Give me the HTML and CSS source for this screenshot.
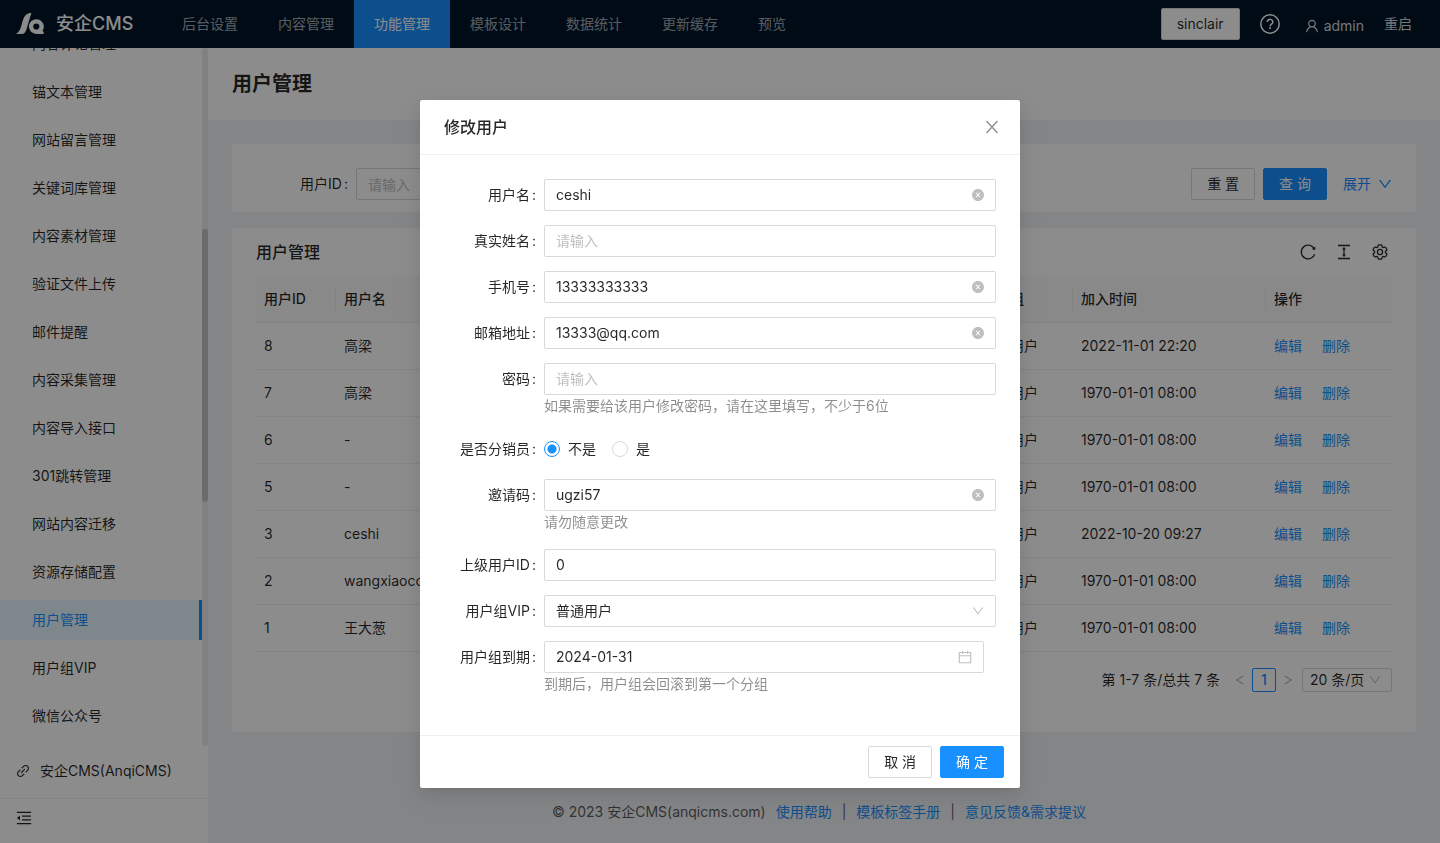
FILE: index.html
```html
<!DOCTYPE html>
<html lang="zh-CN">
<head>
<meta charset="utf-8">
<meta name="viewport" content="width=device-width, initial-scale=1">
<title>用户管理 - 安企CMS</title>
<link rel="stylesheet" href="styles.css">
</head>
<body>
<svg class="sprite" aria-hidden="true">
  <symbol id="i-clear" viewBox="64 64 896 896"><path d="M512 64C264.6 64 64 264.6 64 512s200.6 448 448 448 448-200.6 448-448S759.4 64 512 64zm165.4 618.2l-66-.3L512 563.4l-99.3 118.4-66.1.3c-4.4 0-8-3.5-8-8 0-1.9.7-3.7 1.9-5.2l130.1-155L340.5 359a8.32 8.32 0 01-1.9-5.2c0-4.4 3.6-8 8-8l66.1.3L512 464.6l99.3-118.4 66-.3c4.4 0 8 3.5 8 8 0 1.9-.7 3.7-1.9 5.2L553.5 514l130 155c1.2 1.5 1.9 3.3 1.9 5.2 0 4.4-3.6 8-8 8z"/></symbol>
  <symbol id="i-user" viewBox="64 64 896 896"><path d="M858.5 763.6a374 374 0 00-80.6-119.5 375.63 375.63 0 00-119.5-80.6c-.4-.2-.8-.3-1.2-.5C719.5 518 760 444.7 760 362c0-137-111-248-248-248S264 225 264 362c0 82.7 40.5 156 102.8 201.1-.4.2-.8.3-1.2.5-44.8 18.9-85 46-119.5 80.6a375.63 375.63 0 00-80.6 119.5A371.7 371.7 0 00136 901.8a8 8 0 008 8.2h60c4.4 0 7.9-3.5 8-7.8 2-77.2 33-149.5 87.8-204.3 56.7-56.7 132-87.9 212.2-87.9s155.5 31.2 212.2 87.9C779 752.7 810 825 812 902.2c.1 4.4 3.6 7.8 8 7.8h60a8 8 0 008-8.2c-1-47.8-10.9-94.3-29.5-138.2zM512 534c-45.9 0-89.1-17.9-121.6-50.4S340 407.9 340 362c0-45.9 17.9-89.1 50.4-121.6S466.1 190 512 190s89.1 17.9 121.6 50.4S684 316.1 684 362c0 45.9-17.9 89.1-50.4 121.6S557.9 534 512 534z"/></symbol>
  <symbol id="i-down" viewBox="64 64 896 896"><path d="M884 256h-75c-5.1 0-9.9 2.5-12.9 6.6L512 654.2 227.9 262.6c-3-4.1-7.8-6.6-12.9-6.6h-75c-6.5 0-10.3 7.4-6.5 12.7l352.6 486.1c12.8 17.6 39 17.6 51.7 0l352.6-486.1c3.9-5.3.1-12.7-6.4-12.7z"/></symbol>
  <symbol id="i-reload" viewBox="64 64 896 896"><path d="M909.1 209.3l-56.4 44.1C775.8 155.1 656.2 92 521.9 92 290 92 102.3 279.5 102 511.5 101.7 743.7 289.8 932 521.9 932c181.3 0 335.8-115 394.6-276.1 1.5-4.2-.7-8.9-4.9-10.3l-56.7-19.5a8 8 0 00-10.1 4.8c-1.8 5-3.8 10-5.9 14.9-17.3 41-42.1 77.8-73.7 109.4A344.77 344.77 0 01655.9 829c-42.3 17.9-87.4 27-133.8 27-46.5 0-91.5-9.1-133.8-27A341.5 341.5 0 01279 755.2a342.16 342.16 0 01-73.7-109.4c-17.9-42.4-27-87.4-27-133.9s9.1-91.5 27-133.9c17.3-41 42.1-77.8 73.7-109.4 31.6-31.6 68.4-56.4 109.3-73.8 42.3-17.9 87.4-27 133.8-27 46.5 0 91.5 9.1 133.8 27a341.5 341.5 0 01109.3 73.8c9.9 9.9 19.2 20.4 27.8 31.4l-60.2 47a8 8 0 003 14.1l175.6 43c5 1.2 9.9-2.6 9.9-7.7l.8-180.9c-.1-6.6-7.8-10.3-13-6.2z"/></symbol>
  <symbol id="i-height" viewBox="64 64 896 896"><path d="M840 836H184c-4.4 0-8 3.6-8 8v60c0 4.4 3.6 8 8 8h656c4.4 0 8-3.6 8-8v-60c0-4.4-3.6-8-8-8zm0-724H184c-4.4 0-8 3.6-8 8v60c0 4.4 3.6 8 8 8h656c4.4 0 8-3.6 8-8v-60c0-4.4-3.6-8-8-8zM610.8 378c6 0 9.4-7 5.7-11.7L515.7 238.7a7.14 7.14 0 00-11.3 0L403.6 366.3a7.23 7.23 0 005.7 11.7H476v268h-62.8c-6 0-9.4 7-5.7 11.7l100.8 127.5c2.9 3.7 8.5 3.7 11.3 0l100.8-127.5c3.7-4.7.4-11.7-5.7-11.7H548V378h62.8z"/></symbol>
  <symbol id="i-gear" viewBox="2 2 20 20"><g fill="none" stroke="currentColor" stroke-width="1.6" stroke-linejoin="round"><path d="M9.594 3.94c.09-.542.56-.94 1.11-.94h2.593c.55 0 1.02.398 1.11.94l.213 1.281c.063.374.313.686.645.87.074.04.147.083.22.127.325.196.72.257 1.075.124l1.217-.456a1.125 1.125 0 0 1 1.37.49l1.296 2.247a1.125 1.125 0 0 1-.26 1.431l-1.003.827c-.293.241-.438.613-.43.992a7.723 7.723 0 0 1 0 .255c-.008.378.137.75.43.991l1.004.827c.424.35.534.955.26 1.43l-1.298 2.247a1.125 1.125 0 0 1-1.369.491l-1.217-.456c-.355-.133-.75-.072-1.076.124a6.47 6.47 0 0 1-.22.128c-.331.183-.581.495-.644.869l-.213 1.281c-.09.543-.56.94-1.11.94h-2.594c-.55 0-1.019-.398-1.11-.94l-.213-1.281c-.062-.374-.312-.686-.644-.87a6.52 6.52 0 0 1-.22-.127c-.325-.196-.72-.257-1.076-.124l-1.217.456a1.125 1.125 0 0 1-1.369-.49l-1.297-2.247a1.125 1.125 0 0 1 .26-1.431l1.004-.827c.292-.24.437-.613.43-.991a6.932 6.932 0 0 1 0-.255c.007-.38-.138-.751-.43-.992l-1.004-.827a1.125 1.125 0 0 1-.26-1.43l1.297-2.247a1.125 1.125 0 0 1 1.37-.491l1.216.456c.356.133.751.072 1.076-.124.072-.044.146-.086.22-.128.332-.183.582-.495.644-.869l.214-1.28Z"/><circle cx="12" cy="12" r="3.2"/></g></symbol>
  <symbol id="i-calendar" viewBox="64 64 896 896"><path d="M880 184H712v-64c0-4.4-3.6-8-8-8h-56c-4.4 0-8 3.6-8 8v64H384v-64c0-4.4-3.6-8-8-8h-56c-4.4 0-8 3.6-8 8v64H144c-17.7 0-32 14.3-32 32v664c0 17.7 14.3 32 32 32h736c17.7 0 32-14.3 32-32V216c0-17.7-14.3-32-32-32zm-40 656H184V460h656v380zM184 392V256h128v48c0 4.4 3.6 8 8 8h56c4.4 0 8-3.6 8-8v-48h256v48c0 4.4 3.6 8 8 8h56c4.4 0 8-3.6 8-8v-48h128v136H184z"/></symbol>
  <symbol id="i-fold" viewBox="64 64 896 896"><path d="M408 442h480c4.4 0 8-3.6 8-8v-56c0-4.4-3.6-8-8-8H408c-4.4 0-8 3.6-8 8v56c0 4.4 3.6 8 8 8zm-8 204c0 4.4 3.6 8 8 8h480c4.4 0 8-3.6 8-8v-56c0-4.4-3.6-8-8-8H408c-4.4 0-8 3.6-8 8v56zm504-486H120c-4.4 0-8 3.6-8 8v56c0 4.4 3.6 8 8 8h784c4.4 0 8-3.6 8-8v-56c0-4.4-3.6-8-8-8zm0 632H120c-4.4 0-8 3.6-8 8v56c0 4.4 3.6 8 8 8h784c4.4 0 8-3.6 8-8v-56c0-4.4-3.6-8-8-8zM115.4 518.9L271.7 642c5.8 4.6 14.4.5 14.4-6.9V388.9c0-7.4-8.5-11.5-14.4-6.9L115.4 505.1a8.74 8.74 0 000 13.8z"/></symbol>
  <symbol id="i-link" viewBox="64 64 896 896"><path d="M574 665.4a8.03 8.03 0 00-11.3 0L446.5 781.6c-53.8 53.8-144.6 59.5-204 0-59.5-59.5-53.8-150.2 0-204l116.2-116.2c3.1-3.1 3.1-8.2 0-11.3l-39.8-39.8a8.03 8.03 0 00-11.3 0L191.4 526.5c-84.6 84.6-84.6 221.5 0 306s221.5 84.6 306 0l116.2-116.2c3.1-3.1 3.1-8.2 0-11.3L574 665.4zm258.6-474c-84.6-84.6-221.5-84.6-306 0L410.3 307.6a8.03 8.03 0 000 11.3l39.7 39.7c3.1 3.1 8.2 3.1 11.3 0l116.2-116.2c53.8-53.8 144.6-59.5 204 0 59.5 59.5 53.8 150.2 0 204L665.3 562.6a8.03 8.03 0 000 11.3l39.8 39.8c3.1 3.1 8.2 3.1 11.3 0l116.2-116.2c84.5-84.6 84.5-221.5 0-306.1zM610.1 372.3a8.03 8.03 0 00-11.3 0L372.3 598.7a8.03 8.03 0 000 11.3l39.6 39.6c3.1 3.1 8.2 3.1 11.3 0l226.4-226.4c3.1-3.1 3.1-8.2 0-11.3l-39.5-39.6z"/></symbol>
  <symbol id="i-close" viewBox="0 0 16 16"><path d="M2.5 2l11 12M13.5 2l-11 12" fill="none" stroke="currentColor" stroke-width="1.3"/></symbol>
  <symbol id="i-prev" viewBox="0 0 12 12"><path d="M10 1L2 6l8 5" fill="none" stroke="currentColor"/></symbol>
  <symbol id="i-next" viewBox="0 0 12 12"><path d="M2 1l8 5-8 5" fill="none" stroke="currentColor"/></symbol>
  <symbol id="i-help" viewBox="0 0 20 20"><g fill="none" stroke="currentColor" stroke-width="1.5"><circle cx="10" cy="10" r="9.2"/><path d="M7.2 8a2.8 2.6 0 1 1 4.4 2.1c-1 .7-1.6 1.1-1.6 2.3"/></g><circle cx="10" cy="14.3" r="1"/></symbol>
  <symbol id="i-logo" viewBox="0 0 28 22"><path d="M0 21C3.200 19 4.500 16 5.700 11.500 7.200 5.500 9 1 13 .3c1.300-.3 2.300-.3 2.300.2 0 .5-.5 1.200-.8 2.300L10.600 16C9.500 19.700 8 21 5.500 21z"/><path d="M20.300 6.200a7.400 7.400 0 0 0 0 14.800H27.600c.3-.6.3-1.800-.4-2.600l-.7-.7a7.400 7.400 0 0 0-6.200-11.500zm0 4.200a3.100 3.100 0 1 1 0 6.200 3.100 3.100 0 0 1 0-6.200z" fill-rule="evenodd"/></symbol>
</svg>

<header class="topbar">
  <a class="brand" href="#"><svg class="brand-logo"><use href="#i-logo"/></svg><span>安企CMS</span></a>
  <nav class="topnav">
    <a href="#">后台设置</a>
    <a href="#">内容管理</a>
    <a class="is-active" href="#">功能管理</a>
    <a href="#">模板设计</a>
    <a href="#">数据统计</a>
    <a href="#">更新缓存</a>
    <a href="#">预览</a>
  </nav>
  <div class="top-actions">
    <button class="btn site-btn" type="button">sinclair</button>
    <button class="icon-btn help-btn" type="button" aria-label="帮助"><svg class="icon-20"><use href="#i-help"/></svg></button>
    <a class="account" href="#"><svg class="icon-14"><use href="#i-user"/></svg><span>admin</span></a>
    <a href="#">重启</a>
  </div>
</header>

<div class="layout">
  <aside class="sidebar">
    <div class="menu-scroll">
      <nav class="menu">
        <a href="#">内容评论管理</a>
        <a href="#">锚文本管理</a>
        <a href="#">网站留言管理</a>
        <a href="#">关键词库管理</a>
        <a href="#">内容素材管理</a>
        <a href="#">验证文件上传</a>
        <a href="#">邮件提醒</a>
        <a href="#">内容采集管理</a>
        <a href="#">内容导入接口</a>
        <a href="#">301跳转管理</a>
        <a href="#">网站内容迁移</a>
        <a href="#">资源存储配置</a>
        <a class="is-active" href="#">用户管理</a>
        <a href="#">用户组VIP</a>
        <a href="#">微信公众号</a>
      </nav>
      <div class="scroll-track"><div class="scroll-thumb"></div></div>
    </div>
    <a class="site-link" href="#"><svg class="icon-14"><use href="#i-link"/></svg><span>安企CMS(AnqiCMS)</span></a>
    <button class="collapse" type="button" aria-label="收起菜单"><svg class="icon-16"><use href="#i-fold"/></svg></button>
  </aside>

  <main class="content">
    <div class="page-head"><h1>用户管理</h1></div>
    <div class="page-body">
      <form class="card search">
        <label class="field-label" for="q-id">用户ID</label>
        <input id="q-id" class="box search-input" type="text" placeholder="请输入">
        <div class="search-actions">
          <button class="btn" type="button">重 置</button>
          <button class="btn btn-primary" type="button">查 询</button>
          <a class="expand" href="#">展开<svg class="icon-14"><use href="#i-down"/></svg></a>
        </div>
      </form>

      <section class="card list">
        <div class="list-head">
          <h2>用户管理</h2>
          <div class="tools">
            <button class="icon-btn" type="button" aria-label="刷新"><svg class="icon-16"><use href="#i-reload"/></svg></button>
            <button class="icon-btn" type="button" aria-label="密度"><svg class="icon-16"><use href="#i-height"/></svg></button>
            <button class="icon-btn" type="button" aria-label="列设置"><svg class="icon-16"><use href="#i-gear"/></svg></button>
          </div>
        </div>
        <table class="table">
          <colgroup><col class="c-id"><col><col class="c-group"><col class="c-time"><col class="c-op"></colgroup>
          <thead><tr><th>用户ID</th><th>用户名</th><th>用户组</th><th>加入时间</th><th>操作</th></tr></thead>
          <tbody>
            <tr><td>8</td><td>高梁</td><td>普通用户</td><td>2022-11-01 22:20</td><td><a href="#">编辑</a><a href="#">删除</a></td></tr>
            <tr><td>7</td><td>高梁</td><td>普通用户</td><td>1970-01-01 08:00</td><td><a href="#">编辑</a><a href="#">删除</a></td></tr>
            <tr><td>6</td><td>-</td><td>普通用户</td><td>1970-01-01 08:00</td><td><a href="#">编辑</a><a href="#">删除</a></td></tr>
            <tr><td>5</td><td>-</td><td>普通用户</td><td>1970-01-01 08:00</td><td><a href="#">编辑</a><a href="#">删除</a></td></tr>
            <tr><td>3</td><td>ceshi</td><td>普通用户</td><td>2022-10-20 09:27</td><td><a href="#">编辑</a><a href="#">删除</a></td></tr>
            <tr><td>2</td><td>wangxiaoco</td><td>普通用户</td><td>1970-01-01 08:00</td><td><a href="#">编辑</a><a href="#">删除</a></td></tr>
            <tr><td>1</td><td>王大葱</td><td>普通用户</td><td>1970-01-01 08:00</td><td><a href="#">编辑</a><a href="#">删除</a></td></tr>
          </tbody>
        </table>
        <div class="pager">
          <span class="pager-total">第 1-7 条/总共 7 条</span>
          <button class="page-arrow" type="button" aria-label="上一页" disabled><svg class="icon-10"><use href="#i-prev"/></svg></button>
          <button class="page-num" type="button">1</button>
          <button class="page-arrow" type="button" aria-label="下一页" disabled><svg class="icon-10"><use href="#i-next"/></svg></button>
          <div class="box field-box page-size">
            <select aria-label="每页条数"><option>20 条/页</option></select>
            <svg class="icon-12"><use href="#i-down"/></svg>
          </div>
        </div>
      </section>
    </div>
    <footer class="foot">
      <span>© 2023 安企CMS(anqicms.com)</span>
      <a href="#">使用帮助</a><span>|</span><a href="#">模板标签手册</a><span>|</span><a href="#">意见反馈&amp;需求提议</a>
    </footer>
  </main>
</div>

<div class="mask">
  <div class="modal" role="dialog" aria-labelledby="dlg-title">
    <div class="modal-head">
      <h3 id="dlg-title">修改用户</h3>
      <button class="icon-btn close-btn" type="button" aria-label="关闭"><svg class="icon-16"><use href="#i-close"/></svg></button>
    </div>
    <form class="modal-body">
      <div class="row">
        <label class="field-label" for="f-name">用户名</label>
        <div class="box field-box"><input id="f-name" type="text" value="ceshi"><button class="icon-btn clear" type="button" aria-label="清空"><svg class="icon-12"><use href="#i-clear"/></svg></button></div>
      </div>
      <div class="row">
        <label class="field-label" for="f-real">真实姓名</label>
        <div class="box field-box"><input id="f-real" type="text" placeholder="请输入"></div>
      </div>
      <div class="row">
        <label class="field-label" for="f-phone">手机号</label>
        <div class="box field-box"><input id="f-phone" type="text" value="13333333333"><button class="icon-btn clear" type="button" aria-label="清空"><svg class="icon-12"><use href="#i-clear"/></svg></button></div>
      </div>
      <div class="row">
        <label class="field-label" for="f-mail">邮箱地址</label>
        <div class="box field-box"><input id="f-mail" type="text" value="13333@qq.com"><button class="icon-btn clear" type="button" aria-label="清空"><svg class="icon-12"><use href="#i-clear"/></svg></button></div>
      </div>
      <div class="row">
        <label class="field-label" for="f-pass">密码</label>
        <div class="box field-box"><input id="f-pass" type="text" placeholder="请输入"></div>
        <p class="hint">如果需要给该用户修改密码，请在这里填写，不少于6位</p>
      </div>
      <div class="row" role="radiogroup" aria-labelledby="f-retail">
        <span class="field-label" id="f-retail">是否分销员</span>
        <div class="radios">
          <label><input type="radio" name="retailer" checked>不是</label>
          <label><input type="radio" name="retailer">是</label>
        </div>
      </div>
      <div class="row">
        <label class="field-label" for="f-code">邀请码</label>
        <div class="box field-box"><input id="f-code" type="text" value="ugzi57"><button class="icon-btn clear" type="button" aria-label="清空"><svg class="icon-12"><use href="#i-clear"/></svg></button></div>
        <p class="hint">请勿随意更改</p>
      </div>
      <div class="row">
        <label class="field-label" for="f-parent">上级用户ID</label>
        <div class="box field-box"><input id="f-parent" type="text" value="0"></div>
      </div>
      <div class="row">
        <label class="field-label" for="f-group">用户组VIP</label>
        <div class="box field-box"><select id="f-group"><option>普通用户</option></select><svg class="icon-12 muted"><use href="#i-down"/></svg></div>
      </div>
      <div class="row">
        <label class="field-label" for="f-expire">用户组到期</label>
        <div class="box field-box date-box"><input id="f-expire" type="text" value="2024-01-31"><svg class="icon-14 muted"><use href="#i-calendar"/></svg></div>
        <p class="hint">到期后，用户组会回滚到第一个分组</p>
      </div>
    </form>
    <div class="modal-foot">
      <button class="btn" type="button">取 消</button>
      <button class="btn btn-primary" type="button">确 定</button>
    </div>
  </div>
</div>
</body>
</html>
```

FILE: styles.css
```css
:root {
  --blue: #1890ff;
  --text: rgba(0, 0, 0, 0.85);
  --muted: rgba(0, 0, 0, 0.45);
  --faint: rgba(0, 0, 0, 0.25);
  --border: #d9d9d9;
  --line: #f0f0f0;
}

*, *::before, *::after { box-sizing: border-box; }

body {
  margin: 0;
  height: 100vh;
  display: flex;
  flex-direction: column;
  overflow: hidden;
  background: #f0f2f5;
  color: var(--text);
  font: 14px/22px Inter, "Noto Sans CJK SC", sans-serif;
}

h1, h2, h3, p { margin: 0; }
h2, h3, th { font-weight: 500; }
a { color: var(--blue); text-decoration: none; }
button, input, select { font: inherit; color: inherit; }
svg { display: block; flex: none; fill: currentColor; }

.sprite { position: absolute; width: 0; height: 0; }
.icon-10 { width: 10px; height: 10px; }
.icon-12 { width: 12px; height: 12px; }
.icon-14 { width: 14px; height: 14px; }
.icon-16 { width: 16px; height: 16px; }
.icon-20 { width: 20px; height: 20px; }
.muted { color: var(--faint); }

.icon-btn { padding: 0; border: 0; background: none; cursor: pointer; }

.btn {
  height: 32px;
  padding: 0 15px;
  border: 1px solid var(--border);
  border-radius: 2px;
  background: #fff;
  white-space: nowrap;
  cursor: pointer;
}
.btn-primary { border-color: var(--blue); background: var(--blue); color: #fff; }

.box {
  height: 32px;
  border: 1px solid var(--border);
  border-radius: 2px;
  background: #fff;
}
::placeholder { color: #bfbfbf; opacity: 1; }

.field-box { display: flex; align-items: center; padding: 0 11px; }
.field-box input, .field-box select {
  flex: 1;
  min-width: 0;
  padding: 0;
  border: 0;
  outline: 0;
  background: none;
  appearance: none;
}

.field-label { flex: none; line-height: 32px; white-space: nowrap; }
.field-label::after { content: ":"; margin: 0 8px 0 2px; }

/* Top bar */
.topbar {
  flex: none;
  height: 48px;
  display: flex;
  background: #001529;
}
.brand {
  width: 162px;
  padding-left: 16px;
  display: flex;
  align-items: center;
  gap: 12px;
  color: #fff;
  font-size: 18px;
  font-weight: 500;
}
.brand-logo { width: 28px; height: 22px; }
.topnav { display: flex; line-height: 48px; }
.topnav a { padding: 0 20px; color: rgba(255, 255, 255, 0.65); }
.topnav .is-active {
  background: var(--blue);
  color: #fff;
}
.top-actions {
  margin-left: auto;
  padding-right: 28px;
  display: flex;
  align-items: center;
}
.top-actions a { color: rgba(255, 255, 255, 0.85); }
.site-btn { margin-right: 20px; }
.help-btn { margin-right: 25px; color: #fff; }
.account { display: flex; align-items: center; gap: 5px; margin-right: 20px; padding-top: 3px; }

/* Layout */
.layout { flex: 1; min-height: 0; display: flex; }
.sidebar {
  flex: none;
  width: 208px;
  display: flex;
  flex-direction: column;
  background: #fff;
}
.menu-scroll {
  position: relative;
  flex: 1;
  min-height: 0;
  overflow: hidden;
  display: flex;
  flex-direction: column;
  justify-content: flex-end;
}
.menu {
  flex: none;
  margin-right: 6px;
  padding-bottom: 10px;
  display: grid;
  gap: 8px;
  line-height: 40px;
}
.menu a { padding-left: 32px; color: var(--text); }
.menu .is-active {
  border-right: 3px solid var(--blue);
  background: #e6f7ff;
  color: var(--blue);
}
.scroll-track {
  position: absolute;
  inset: 0 0 0 auto;
  width: 6px;
  border-radius: 3px;
  background: #ececec;
}
.scroll-thumb {
  position: absolute;
  top: 26%;
  width: 6px;
  height: 39%;
  border-radius: 3px;
  background: #c4c4c4;
}
.site-link {
  height: 53px;
  padding: 0 16px 3px;
  display: flex;
  align-items: center;
  gap: 10px;
  border-bottom: 1px solid var(--line);
  color: var(--text);
}
.collapse {
  height: 44px;
  padding: 0 16px 6px;
  display: flex;
  align-items: center;
  border: 0;
  background: none;
}

.content { flex: 1; min-width: 0; }
.page-head { padding: 20px 24px; background: #fff; }
.page-head h1 { font-size: 20px; font-weight: 600; line-height: 32px; }
.page-body { padding: 24px; display: grid; gap: 16px; }
.card { padding: 24px; background: #fff; }

.search { display: flex; align-items: center; padding: 24px 24px 12px 68px; }
.search-input { width: 240px; padding: 0 11px; }
.search-actions { margin-left: auto; display: flex; align-items: center; gap: 8px; }
.expand { display: flex; align-items: center; gap: 7px; padding-left: 8px; }

.list { padding-top: 0; }
.list-head { height: 48px; display: flex; align-items: center; justify-content: space-between; }
.list-head h2 { font-size: 16px; line-height: 24px; }
.tools { display: flex; gap: 20px; padding-right: 4px; }

.table { width: 100%; border-collapse: separate; border-spacing: 0; table-layout: fixed; text-align: left; }
.c-id { width: 80px; }
.c-group { width: 99px; }
.c-time { width: 193px; }
.c-op { width: 126px; }
.table th, .table td { height: 47px; padding: 0 8px; border-bottom: 1px solid var(--line); }
.table th {
  background: linear-gradient(#ebebeb, #ebebeb) right center / 1px 22px no-repeat #fafafa;
}
.table th:last-child { background: #fafafa; }
.table td a + a { margin-left: 20px; }

.pager { display: flex; align-items: center; justify-content: flex-end; padding: 16px 0; }
.pager-total { margin-right: 8px; }
.page-arrow {
  width: 24px;
  height: 24px;
  padding: 0;
  display: grid;
  place-items: center;
  border: 0;
  background: none;
  color: var(--muted);
}
.page-num {
  width: 24px;
  height: 24px;
  padding: 0;
  border: 1px solid var(--blue);
  border-radius: 2px;
  background: #fff;
  color: var(--blue);
  font-weight: 500;
}
.page-size { width: 90px; height: 24px; margin-left: 2px; padding: 0 10px 0 7px; color: var(--text); }
.page-size svg { color: var(--faint); }

.foot {
  padding: 45px 10px 0 0;
  display: flex;
  justify-content: center;
  gap: 10px;
  color: rgba(0, 0, 0, 0.65);
}

/* Dialog */
.mask {
  position: fixed;
  inset: 0;
  padding-top: 100px;
  display: flex;
  align-items: flex-start;
  justify-content: center;
  background: rgba(0, 0, 0, 0.45);
}
.modal {
  width: 600px;
  border-radius: 2px;
  background: #fff;
  box-shadow: 0 3px 6px -4px rgba(0, 0, 0, 0.12), 0 6px 16px rgba(0, 0, 0, 0.08), 0 9px 28px 8px rgba(0, 0, 0, 0.05);
}
.modal-head {
  padding: 16px 20px 16px 24px;
  display: flex;
  align-items: center;
  justify-content: space-between;
  border-bottom: 1px solid var(--line);
}
.modal-head h3 { font-size: 16px; line-height: 22px; }
.close-btn { color: var(--muted); }
.modal-body { padding: 24px 24px 38px 32px; display: grid; gap: 14px; }
.row { display: grid; grid-template-columns: 92px 1fr; }
.row .field-label { justify-self: end; }
.hint { grid-column: 2; height: 24px; color: var(--muted); line-height: 22px; }
.date-box { margin-right: 12px; }
.clear { color: #bfbfbf; }
.radios { display: flex; align-items: center; gap: 16px; }
.radios label { display: flex; align-items: center; gap: 8px; }
.radios input {
  width: 16px;
  height: 16px;
  margin: 0;
  appearance: none;
  border: 1px solid var(--border);
  border-radius: 50%;
  background: #fff;
}
.radios input:checked {
  border-color: var(--blue);
  background: radial-gradient(circle, var(--blue) 4px, #fff 5px);
}
.modal-foot {
  padding: 10px 16px;
  display: flex;
  justify-content: flex-end;
  gap: 8px;
  border-top: 1px solid var(--line);
}
```
